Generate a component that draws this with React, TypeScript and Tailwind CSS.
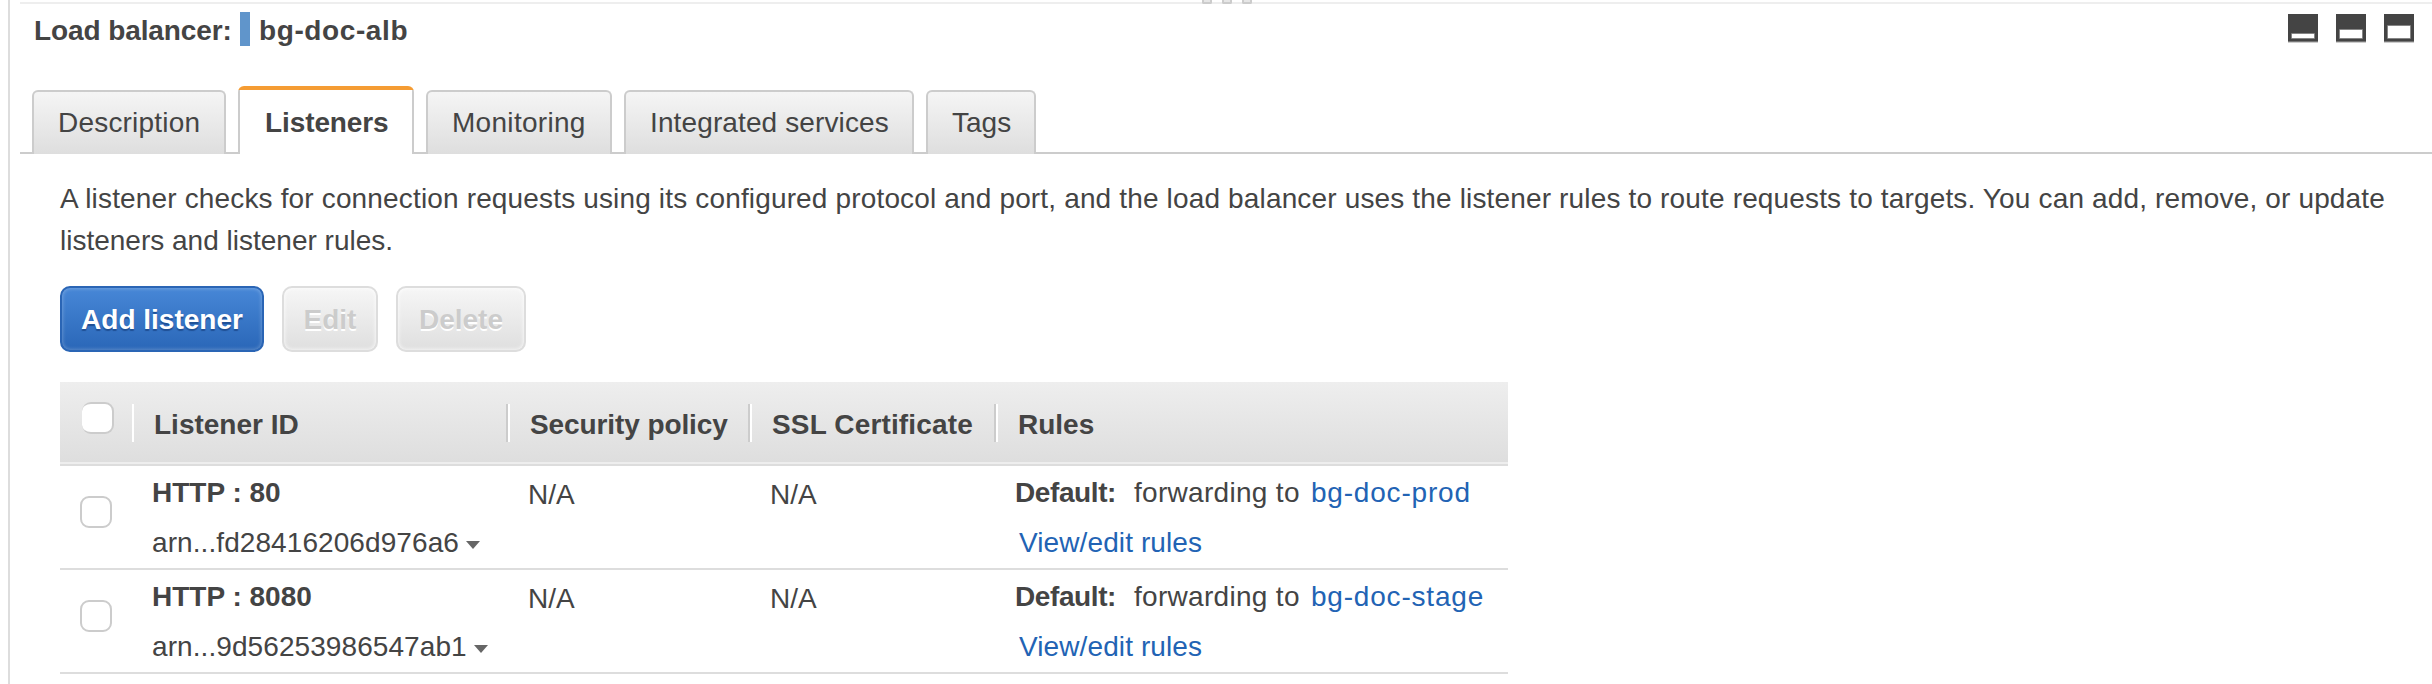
import React from "react";

const tabs = [
  { label: "Description", width: "w-[194px]", tracking: "tracking-[0.2px]" },
  { label: "Listeners", width: "w-[176px]", tracking: "tracking-[-0.1px]", active: true },
  { label: "Monitoring", width: "w-[186px]", tracking: "tracking-[0.3px]" },
  { label: "Integrated services", width: "w-[290px]", tracking: "tracking-[0.12px]" },
  { label: "Tags", width: "w-[110px]", tracking: "tracking-normal" },
];

const rows = [
  { name: "HTTP : 80", arn: "arn...fd28416206d976a6", target: "bg-doc-prod" },
  { name: "HTTP : 8080", arn: "arn...9d56253986547ab1", target: "bg-doc-stage" },
];

function PaneIcon({ top }: { top: number }) {
  return (
    <svg width="30" height="29" viewBox="0 0 30 29">
      <rect width="30" height="29" fill="#ccc" />
      <rect width="30" height="28" fill="#777" />
      <rect width="30" height="27" fill="#444" />
      <rect x="3" y={top - 1} width="24" height={26 - top} rx="1" fill="#858585" />
      <rect x="4" y={top} width="22" height={24 - top} fill="#fff" />
    </svg>
  );
}

function Caret() {
  return (
    <svg width="14" height="8" viewBox="0 0 14 8" className="mt-1">
      <path d="M0 0H14L7 8Z" fill="#666" />
    </svg>
  );
}

type TabProps = { label: string; width: string; tracking: string; active?: boolean };

function Tab({ label, width, tracking, active }: TabProps) {
  return active ? (
    <div className={`${width} h-[68px] shrink-0 overflow-hidden rounded-t-[6px] bg-[#f59c33] pt-1`}>
      <div className={`${tracking} h-16 border-x-2 border-[#ccc] bg-white pl-[25px] pt-[17px] font-bold leading-8`}>
        {label}
      </div>
    </div>
  ) : (
    <div
      className={`${width} ${tracking} h-16 shrink-0 whitespace-nowrap rounded-t-[6px] border-2 border-b-0 border-[#ccc] bg-linear-to-b from-[#f5f5f5] to-[#dedede] pl-6 pt-[15px] leading-8`}
    >
      {label}
    </div>
  );
}

function HeadCell({ children, className }: { children: string; className: string }) {
  return <div className={`${className} h-[38px] whitespace-nowrap pl-5 pt-[5px] leading-8`}>{children}</div>;
}

export default function App() {
  return (
    <div className="flex h-[684px] w-[2432px] overflow-hidden bg-white pl-2 font-['Liberation_Sans',Arial,sans-serif] text-[28px] leading-8 text-[#444]">
      <div className="w-0.5 shrink-0 bg-[#ddd]" />
      <div className="ml-2.5 flex grow flex-col">
        <div className="relative mt-0.5 h-0.5 shrink-0 bg-[#eee]">
          <div className="absolute -top-0.5 left-[1182px] flex gap-2.5">
            <i className="h-1 w-2.5 rounded-b-[2px] border-2 border-t-0 border-[#ccc] bg-[#e6e6e6]" />
            <i className="h-1 w-2.5 rounded-b-[2px] border-2 border-t-0 border-[#ccc] bg-[#e6e6e6]" />
            <i className="h-1 w-2.5 rounded-b-[2px] border-2 border-t-0 border-[#ccc] bg-[#e6e6e6]" />
          </div>
        </div>
        <header className="flex h-[82px] shrink-0 items-start pl-3.5 pr-[18px] pt-2 font-bold">
          <span className="mt-[3px] w-[206px] whitespace-nowrap tracking-[-0.1px]">Load balancer:</span>
          <span className="h-[34px] w-2.5 bg-[#6095cb]" />
          <span className="ml-[9px] mt-[3px] grow tracking-[0.6px]">bg-doc-alb</span>
          <div className="mt-0.5 flex gap-[18px]">
            <PaneIcon top={20} />
            <PaneIcon top={16} />
            <PaneIcon top={12} />
          </div>
        </header>
        <nav className="flex h-[68px] shrink-0 items-end">
          <div className="h-0.5 w-3 bg-[#ccc]" />
          {tabs.map((t, i) => (
            <React.Fragment key={t.label}>
              {i > 0 && <div className="h-0.5 w-3 shrink-0 bg-[#ccc]" />}
              <Tab {...t} />
            </React.Fragment>
          ))}
          <div className="h-0.5 grow bg-[#ccc]" />
        </nav>
        <main className="flex flex-col pl-10">
          <p className="mt-6 h-[108px] whitespace-nowrap leading-[42px]">
            <span className="tracking-[0.155px]">
              A listener checks for connection requests using its configured protocol and port, and the load balancer
              uses the listener rules to route requests to targets. You can add, remove, or update
            </span>
            <br />
            listeners and listener rules.
          </p>
          <div className="flex h-[66px] gap-[18px] font-bold">
            <button className="w-[204px] rounded-[10px] border-2 border-[#2a65b5] bg-linear-to-b from-[#4787d7] to-[#2a67b8] pt-px text-white shadow-[inset_0_0_4px_rgba(255,255,255,0.35)] [text-shadow:0_2px_1px_#1f4f94]">
              Add listener
            </button>
            <button className="w-24 rounded-[10px] border-2 border-[#ddd] bg-linear-to-b from-[#f6f6f6] to-[#dfdfdf] pt-px text-[#ccc] shadow-[inset_0_0_4px_#fff] [text-shadow:0_2px_0_#fff]">
              Edit
            </button>
            <button className="w-[130px] rounded-[10px] border-2 border-[#ddd] bg-linear-to-b from-[#f6f6f6] to-[#dfdfdf] pt-px text-[#ccc] shadow-[inset_0_0_4px_#fff] [text-shadow:0_2px_0_#fff]">
              Delete
            </button>
          </div>
          <section className="mt-[30px] w-[1448px]">
            <div className="flex h-20 items-start bg-linear-to-b from-[#eee] to-[#dedede] pt-[22px] font-bold">
              <div className="w-[72px] pl-[22px]">
                <div className="-mt-0.5 size-8 rounded-[9px] border-2 border-l-0 border-[#ccc] bg-white" />
              </div>
              <HeadCell className="w-[376px] border-x-2 border-l-white border-r-[#ccc]">Listener ID</HeadCell>
              <HeadCell className="w-[242px] border-x-2 border-l-white border-r-[#ccc] tracking-[-0.1px]">
                Security policy
              </HeadCell>
              <HeadCell className="w-[246px] border-x-2 border-l-white border-r-[#ccc] tracking-[0.15px]">
                SSL Certificate
              </HeadCell>
              <HeadCell className="w-[300px] border-l-2 border-l-white">Rules</HeadCell>
            </div>
            <div className="h-1 border-b-2 border-[#ddd] bg-[#eee]" />
            {rows.map((r) => (
              <div key={r.name} className="flex h-[104px] items-start border-b-2 border-[#ddd] whitespace-nowrap">
                <div className="w-[92px] pl-5 pt-[30px]">
                  <div className="size-8 rounded-[9px] border-2 border-[#ccc]" />
                </div>
                <div className="w-[376px] pt-[11px]">
                  <div className="h-[50px] font-bold">{r.name}</div>
                  <div className="flex items-center gap-[7px]">
                    <span className="tracking-[0.08px]">{r.arn}</span>
                    <Caret />
                  </div>
                </div>
                <div className="w-[242px] pt-[13px]">N/A</div>
                <div className="w-[245px] pt-[13px]">N/A</div>
                <div className="pt-[11px]">
                  <div className="flex h-[50px]">
                    <b className="w-[119px] tracking-[-0.4px]">Default:</b>
                    <span className="w-[177px] tracking-[0.3px]">forwarding to</span>
                    <a className="tracking-[0.8px] text-[#2263b4]">{r.target}</a>
                  </div>
                  <a className="block pl-1 tracking-[0.1px] text-[#2263b4]">View/edit rules</a>
                </div>
              </div>
            ))}
          </section>
        </main>
      </div>
    </div>
  );
}
